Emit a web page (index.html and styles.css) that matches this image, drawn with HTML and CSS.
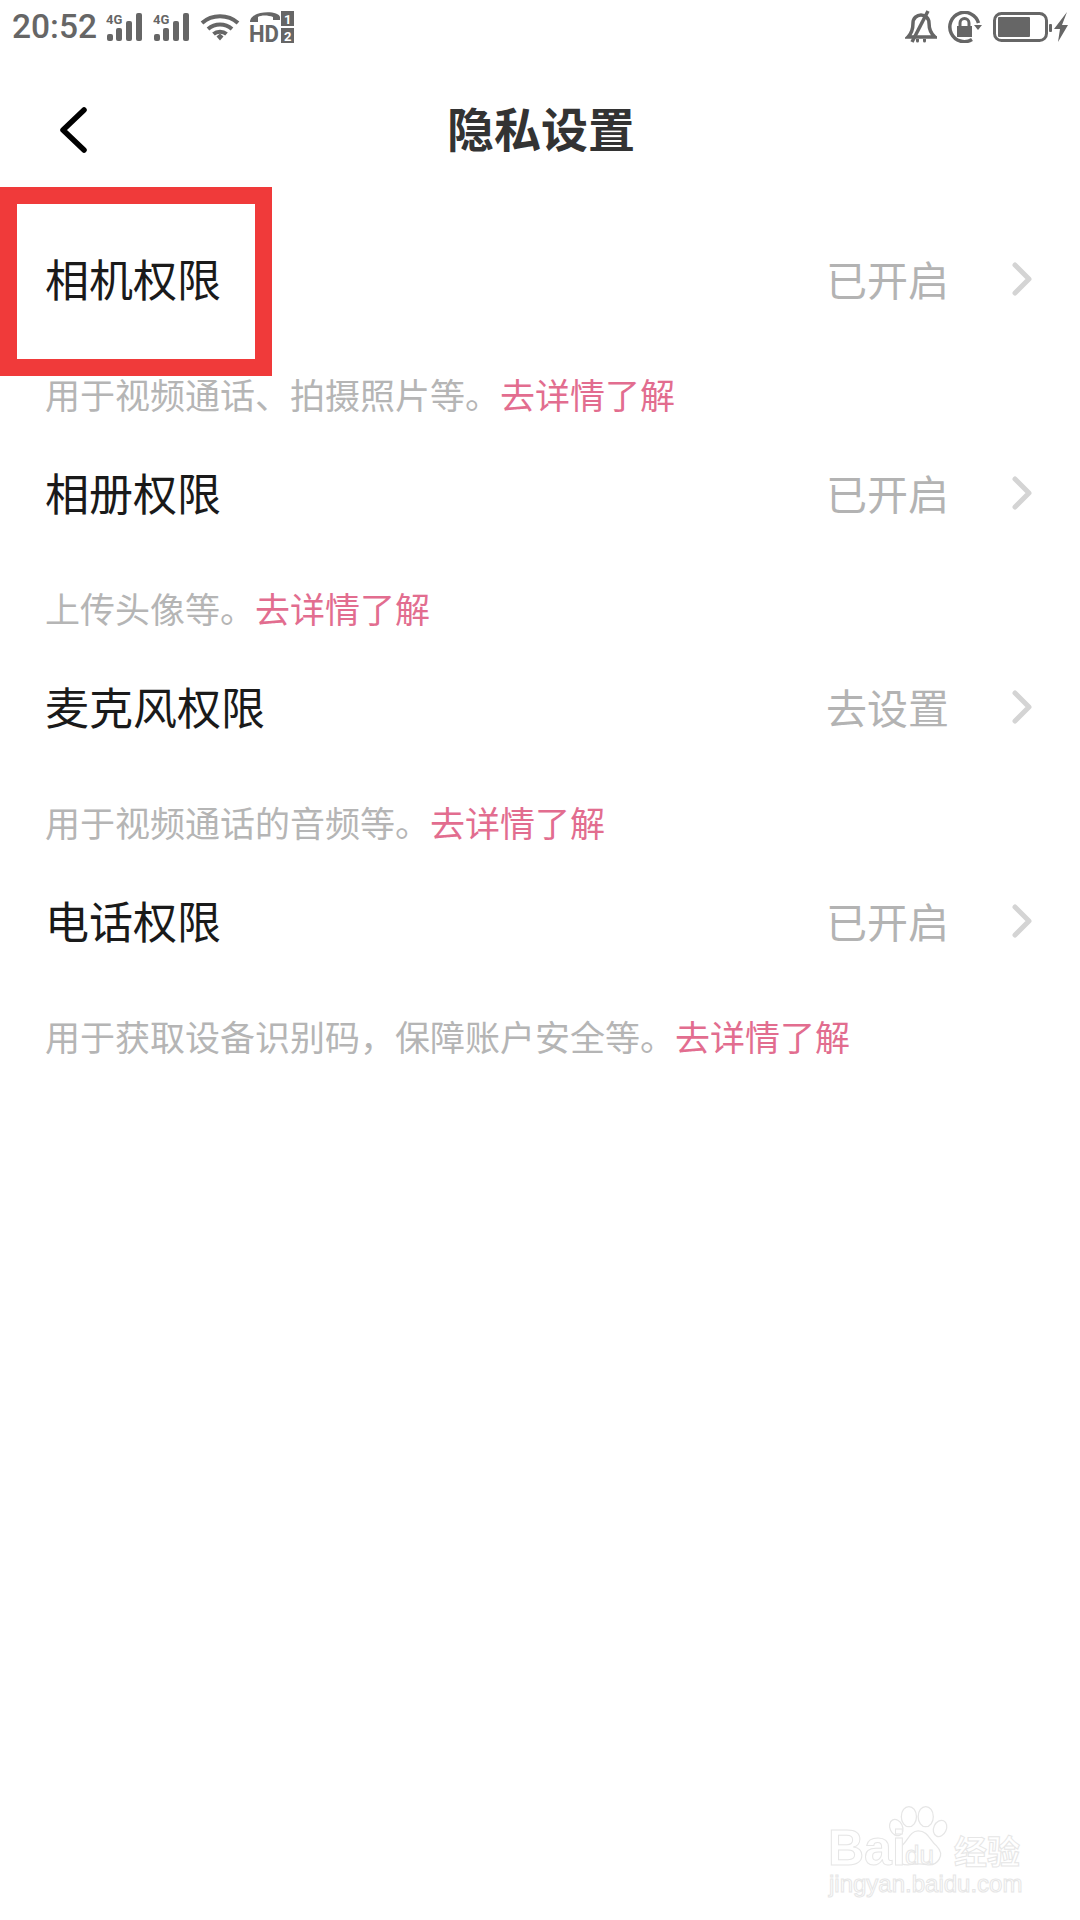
FILE: index.html
```html
<!DOCTYPE html>
<html lang="zh-CN">
<head>
<meta charset="utf-8">
<title>隐私设置</title>
<link rel="stylesheet" href="styles.css">
</head>
<body>
<div class="page">
  <div class="status">
    <div class="status-left">
      <span class="time">20:52</span>
      <svg class="ic-sig" viewBox="0 0 40 30"><text x="0" y="12" class="sig-t">4G</text><rect x="1" y="22" width="6" height="7" rx="2"/><rect x="10" y="16" width="6" height="13" rx="2"/><rect x="20" y="9" width="6" height="20" rx="2"/><rect x="30" y="1" width="6" height="28" rx="2"/></svg>
      <svg class="ic-sig" viewBox="0 0 40 30"><text x="0" y="12" class="sig-t">4G</text><rect x="1" y="22" width="6" height="7" rx="2"/><rect x="10" y="16" width="6" height="13" rx="2"/><rect x="20" y="9" width="6" height="20" rx="2"/><rect x="30" y="1" width="6" height="28" rx="2"/></svg>
      <svg class="ic-wifi" viewBox="0 0 40 28"><path d="M2 10C12 1 28 1 38 10" class="wf"/><path d="M8 16C15 10 25 10 32 16" class="wf"/><path d="M13.500 21C17 18 23 18 26.500 21" class="wf"/><path d="M16.500 23.500L20 20.500L23.500 23.500L20 27.500Z"/></svg>
      <svg class="ic-hd" viewBox="0 0 46 32"><path d="M1 11C1 -1 30 -1 31 6L31 9L24 9L24 6C19 4 12 4 9 6L9 11Z"/><text x="0" y="31" class="hd-t" textLength="30" lengthAdjust="spacingAndGlyphs">HD</text><rect x="32" y="0" width="13" height="15"/><text x="35" y="13" class="hd-n">1</text><rect x="32" y="17" width="13" height="15"/><text x="35" y="30" class="hd-n">2</text></svg>
    </div>
    <div class="status-right">
      <svg class="ic-bell" viewBox="0 0 32 34"><path d="M3 27C7 23 8 18 8 13C8 8 12 5 16 5C20 5 24 8 24 13C24 18 25 23 30 27Z" class="ln"/><path d="M7 32L23 1" class="ln"/><path d="M11 29h3v2a1.500 1.500 0 0 1-3 0ZM18 29h3v2a1.500 1.500 0 0 1-3 0Z"/></svg>
      <svg class="ic-lock" viewBox="0 0 34 32"><path d="M30.500 12A14.600 14.600 0 1 0 24 28.500" class="ln"/><path d="M26 14L34 14L30 19Z"/><rect x="9" y="15" width="15" height="11"/><path d="M12 15V12A4.500 4.500 0 0 1 21 12V15" class="ln-t"/></svg>
      <svg class="ic-batt" viewBox="0 0 76 30"><rect x="1.500" y="1.500" width="52" height="27" rx="7" class="ln-t"/><rect x="5" y="5" width="32" height="20" rx="1"/><rect x="56" y="12" width="3" height="8" rx="1"/><path d="M74 0L61 17L67 17L65 30L75 13L69 13Z"/></svg>
    </div>
  </div>

  <header class="nav">
    <svg class="back" viewBox="0 0 30 46"><path d="M26 3L5 23L26 43"/></svg>
    <h1 class="nav-title">隐私设置</h1>
  </header>

  <main class="list">
    <section class="item">
      <div class="item-head">
        <span class="item-name">相机权限</span>
        <span class="item-state">已开启</span>
        <svg class="chev" viewBox="0 0 20 34"><path d="M3 3L17 17L3 31"/></svg>
      </div>
      <p class="item-desc">用于视频通话、拍摄照片等。<span class="more">去详情了解</span></p>
    </section>
    <section class="item">
      <div class="item-head">
        <span class="item-name">相册权限</span>
        <span class="item-state">已开启</span>
        <svg class="chev" viewBox="0 0 20 34"><path d="M3 3L17 17L3 31"/></svg>
      </div>
      <p class="item-desc">上传头像等。<span class="more">去详情了解</span></p>
    </section>
    <section class="item">
      <div class="item-head">
        <span class="item-name">麦克风权限</span>
        <span class="item-state">去设置</span>
        <svg class="chev" viewBox="0 0 20 34"><path d="M3 3L17 17L3 31"/></svg>
      </div>
      <p class="item-desc">用于视频通话的音频等。<span class="more">去详情了解</span></p>
    </section>
    <section class="item">
      <div class="item-head">
        <span class="item-name">电话权限</span>
        <span class="item-state">已开启</span>
        <svg class="chev" viewBox="0 0 20 34"><path d="M3 3L17 17L3 31"/></svg>
      </div>
      <p class="item-desc">用于获取设备识别码，保障账户安全等。<span class="more">去详情了解</span></p>
    </section>
  </main>

  <div class="redbox"></div>

  <div class="mark">
    <svg class="paw" viewBox="0 0 70 76"><ellipse cx="23" cy="15" rx="9" ry="12"/><ellipse cx="43" cy="15" rx="9" ry="12"/><ellipse cx="8" cy="28" rx="7.500" ry="10" transform="rotate(-25 8 28)"/><ellipse cx="60" cy="29" rx="7.500" ry="10" transform="rotate(25 60 29)"/><path d="M34 32C46 32 48 44 56 50C66 60 58 74 44 72C38 71 30 71 24 72C10 74 4 60 14 50C22 44 24 32 34 32Z"/></svg>
    <span class="mark-bai">Bai</span>
    <span class="mark-du">du</span>
    <span class="mark-cn">经验</span>
    <span class="mark-url">jingyan.baidu.com</span>
  </div>
</div>
</body>
</html>
```
FILE: styles.css
```css
* { box-sizing: border-box; }
html, body { margin: 0; padding: 0; background: #fff; }
body { font-family: "Noto Sans CJK SC", "Noto Sans", sans-serif; }
.page { position: relative; width: 1080px; height: 1920px; overflow: hidden; background: #fff; }

.status { height: 54px; display: flex; justify-content: space-between; align-items: flex-start; padding: 11px 11px 0 12px; fill: #666; }
.status-left, .status-right { display: flex; align-items: center; height: 32px; }
.time { font-family: Roboto, sans-serif; font-size: 33.500px; font-weight: 500; line-height: 32px; color: #666; width: 94px; }
.ic-sig { width: 40px; height: 30px; margin-right: 7px; }
.sig-t { font-family: Roboto, sans-serif; font-size: 13px; font-weight: 700; }
.ic-wifi { width: 40px; height: 28px; margin: 0 9px 0 0; }
.wf { fill: none; stroke: #666; stroke-width: 4; }
.ic-hd { width: 46px; height: 32px; overflow: visible; }
.hd-t { font-family: Roboto, sans-serif; font-size: 24px; font-weight: 700; }
.hd-n { font-family: Roboto, sans-serif; font-size: 13px; font-weight: 700; fill: #fff; }
.ic-bell { width: 32px; height: 34px; margin-right: 11px; }
.ic-lock { width: 34px; height: 32px; margin-right: 11px; }
.ic-batt { width: 76px; height: 30px; }
.ln { fill: none; stroke: #666; stroke-width: 3.500; }
.ln-t { fill: none; stroke: #666; stroke-width: 3; }

.nav { height: 146px; padding-left: 2px; display: flex; align-items: center; justify-content: center; position: relative; }
.back { position: absolute; left: 58px; top: 53px; width: 30px; height: 46px; fill: none; stroke: #000; stroke-width: 5.500; stroke-linecap: round; stroke-linejoin: round; }
.nav-title { margin: 0; font-size: 47px; font-weight: 700; line-height: 60px; color: #333; }

.list { margin-top: 28px; padding: 0 49px 0 45px; display: flex; flex-direction: column; gap: 23px; }
.item { height: 191px; }
.item-head { height: 100px; display: flex; align-items: center; }
.item-name { flex: 1; font-size: 44px; line-height: 60px; color: #1a1a1a; }
.item-state { font-size: 41px; line-height: 60px; color: #b3b3b3; margin: 0 63px 0 0; }
.chev { width: 20px; height: 34px; margin: 2px -1px 0 0; fill: none; stroke: #d4d4d4; stroke-width: 5; stroke-linecap: round; stroke-linejoin: round; }
.item-desc { margin: 41px 0 0; font-size: 35px; line-height: 50px; color: #b5b5b5; }
.more { color: #e26d8f; }

.redbox { position: absolute; left: 0; top: 187px; width: 272px; height: 189px; border: 17px solid #f03a3a; }

.mark { position: absolute; left: 826px; top: 1800px; width: 200px; height: 100px; }
.mark span { position: absolute; color: #fff; -webkit-text-stroke: 1px #e6e6e6; white-space: nowrap; }
.paw { position: absolute; left: 58px; top: 4px; width: 70px; height: 64px; fill: #fff; stroke: #e6e6e6; stroke-width: 1.500; }
.mark-bai { left: 2px; top: 28px; font-family: "Liberation Sans", sans-serif; font-size: 50px; line-height: 40px; font-weight: 700; }
.mark-du { left: 79px; top: 42px; font-family: "Liberation Sans", sans-serif; font-size: 26px; line-height: 26px; }
.mark-cn { left: 128px; top: 32px; font-size: 33px; line-height: 36px; font-weight: 700; }
.mark-url { left: 3px; top: 69px; font-family: "Liberation Sans", sans-serif; font-size: 24px; line-height: 30px; }
```
